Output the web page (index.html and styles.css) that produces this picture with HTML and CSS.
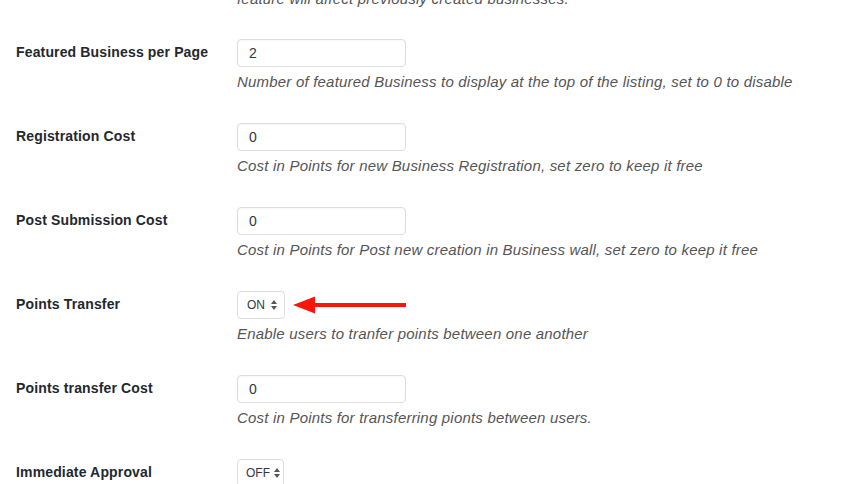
FILE: index.html
```html
<!DOCTYPE html>
<html lang="en">
<head>
    <meta charset="UTF-8">
    <meta name="viewport" content="width=device-width, initial-scale=1.0">
    <title>Business Settings</title>
    <link rel="stylesheet" href="styles.css">
</head>
<body>
    <div class="settings">
        <div class="row tail">
            <div class="label"></div>
            <div class="field">
                <p class="description">feature will affect previously created businesses.</p>
            </div>
        </div>

        <div class="row">
            <label class="label" for="featuredPerPage">Featured Business per Page</label>
            <div class="field">
                <input type="text" id="featuredPerPage" class="text-input" value="2">
                <p class="description">Number of featured Business to display at the top of the listing, set to 0 to disable</p>
            </div>
        </div>

        <div class="row">
            <label class="label" for="registrationCost">Registration Cost</label>
            <div class="field">
                <input type="text" id="registrationCost" class="text-input" value="0">
                <p class="description">Cost in Points for new Business Registration, set zero to keep it free</p>
            </div>
        </div>

        <div class="row">
            <label class="label" for="postCost">Post Submission Cost</label>
            <div class="field">
                <input type="text" id="postCost" class="text-input" value="0">
                <p class="description">Cost in Points for Post new creation in Business wall, set zero to keep it free</p>
            </div>
        </div>

        <div class="row">
            <label class="label" for="pointsTransfer">Points Transfer</label>
            <div class="field">
                <div class="select-wrap">
                    <div class="select-box" id="pointsTransfer">
                        <span>ON</span>
                        <svg class="updown" width="6" height="10" viewBox="0 0 6 10"><path d="M3 0L6 4H0Z M3 10L0 6H6Z" fill="#555"/></svg>
                    </div>
                    <svg class="callout-arrow" width="114" height="20" viewBox="0 0 114 20">
                        <path d="M19 8H113V12H19Z" fill="#f5170c"/>
                        <path d="M0 10L22 1.5V18.5Z" fill="#f5170c"/>
                    </svg>
                </div>
                <p class="description">Enable users to tranfer points between one another</p>
            </div>
        </div>

        <div class="row">
            <label class="label" for="transferCost">Points transfer Cost</label>
            <div class="field">
                <input type="text" id="transferCost" class="text-input" value="0">
                <p class="description">Cost in Points for transferring pionts between users.</p>
            </div>
        </div>

        <div class="row">
            <label class="label" for="immediateApproval">Immediate Approval</label>
            <div class="field">
                <div class="select-box off" id="immediateApproval">
                    <span>OFF</span>
                    <svg class="updown" width="6" height="10" viewBox="0 0 6 10"><path d="M3 0L6 4H0Z M3 10L0 6H6Z" fill="#555"/></svg>
                </div>
            </div>
        </div>
    </div>
</body>
</html>
```

FILE: styles.css
```css
body {
    margin: 0;
    background-color: #fff;
    font-family: "Liberation Sans", Arial, sans-serif;
    font-size: 14px;
    color: #23282d;
    overflow: hidden;
}
.settings {
    padding-left: 16px;
}
.row {
    display: flex;
    padding: 15px 0 16px;
}
.tail {
    margin-top: -11px;
    padding-top: 0;
    padding-bottom: 15px;
}
.label {
    width: 221px;
    flex-shrink: 0;
    padding-top: 3px;
    line-height: 20px;
    font-weight: bold;
    letter-spacing: 0.15px;
}
.field {
    display: flex;
    flex-direction: column;
    align-items: flex-start;
}
.text-input {
    box-sizing: border-box;
    width: 169px;
    height: 28px;
    margin: 0;
    padding: 3px 11px;
    border: 1px solid #ddd;
    border-radius: 4px;
    font-family: inherit;
    font-size: 14px;
    color: #32373c;
    box-shadow: inset 0 1px 2px rgba(0,0,0,0.04);
}
.description {
    margin: 5px 0 0;
    line-height: 20px;
    font-size: 15px;
    letter-spacing: 0.2px;
    font-style: italic;
    color: #555;
}
.tail .description {
    margin-top: 0;
}
.select-wrap {
    position: relative;
}
.select-box {
    box-sizing: border-box;
    display: flex;
    align-items: center;
    gap: 6px;
    width: 48px;
    height: 28px;
    padding: 0 0 0 9px;
    border: 1px solid #ddd;
    border-radius: 4px;
    font-size: 12px;
    color: #32373c;
}
.select-box.off {
    width: 47px;
    padding-left: 8px;
    gap: 4px;
}
.callout-arrow {
    position: absolute;
    left: 56px;
    top: 4px;
}
```
